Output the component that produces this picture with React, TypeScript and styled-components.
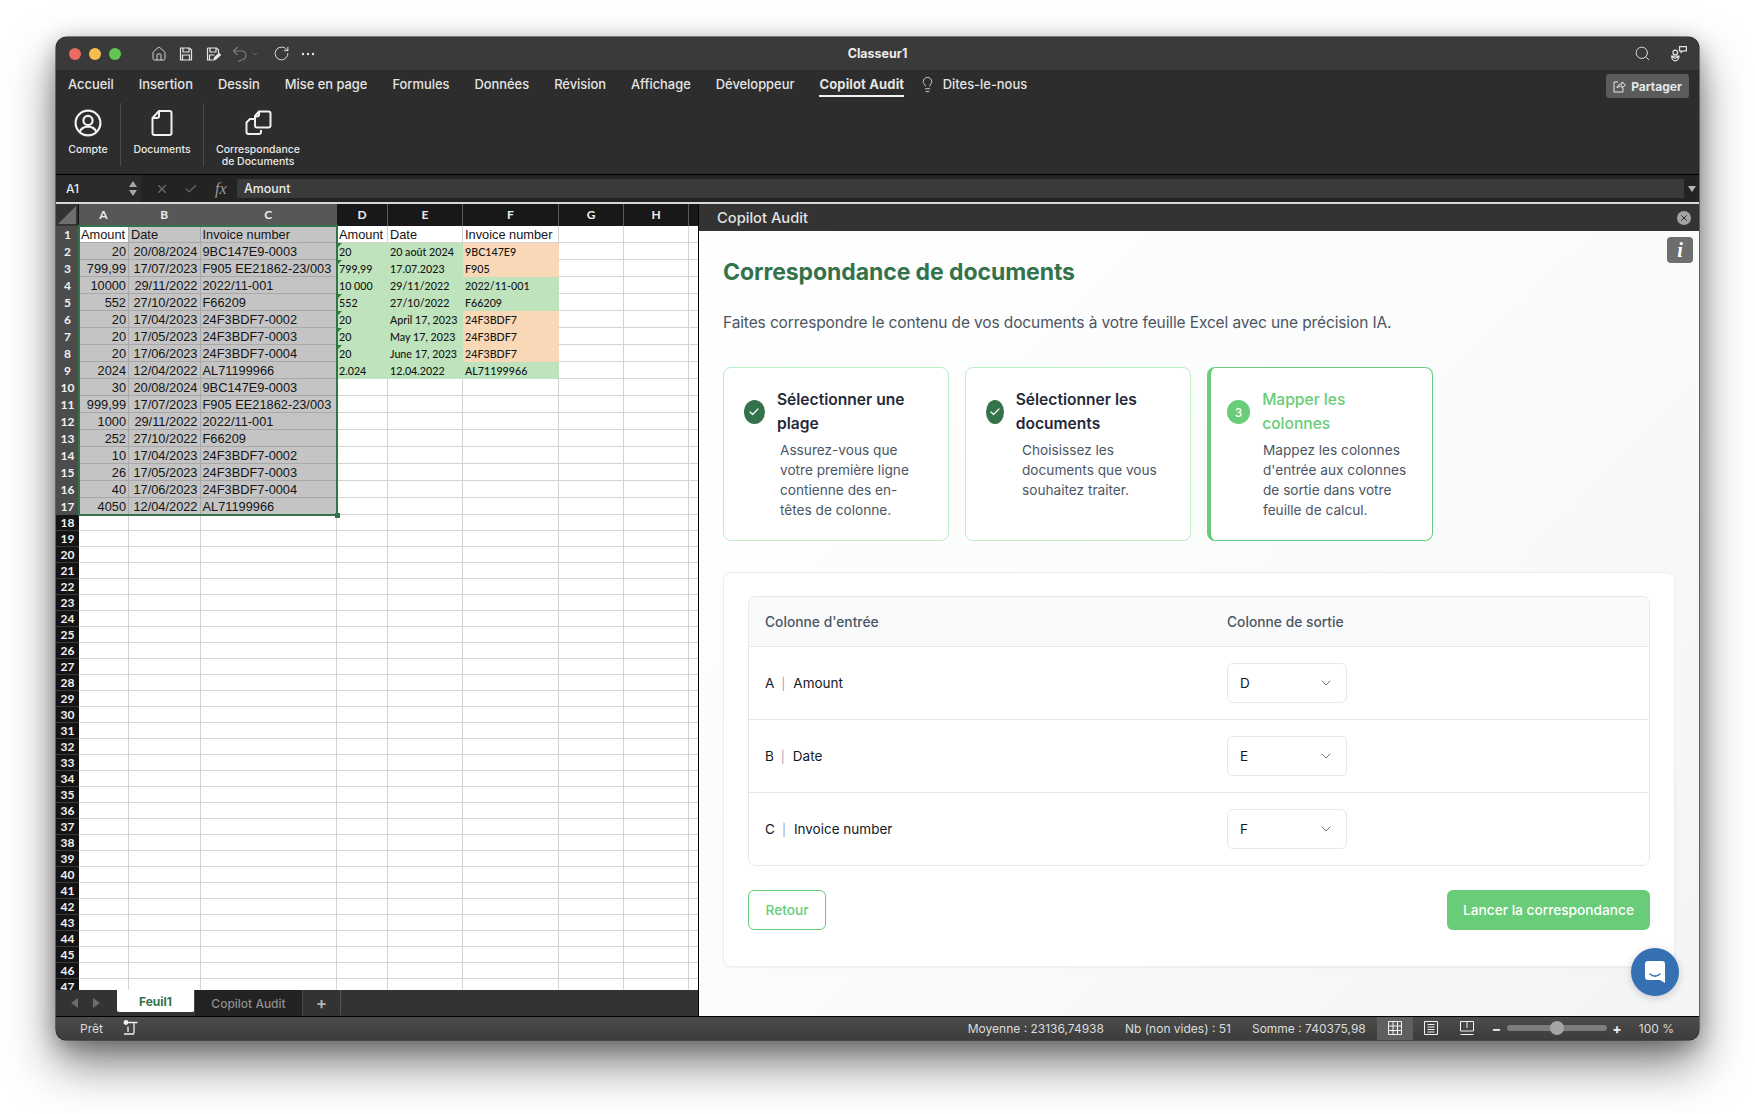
import React from "react";
import styled, { createGlobalStyle } from "styled-components";
import { House, RotateCw, Search, Lightbulb, ChevronDown, Check, X } from "lucide-react";

const Global = createGlobalStyle`
  html, body { margin: 0; padding: 0; background: #fff; }
  body { width: 1755px; height: 1114px; overflow: hidden; font-family: Inter, "Liberation Sans", sans-serif; }
  * { box-sizing: border-box; }
`;

const Page = styled.div`
  padding: 37px 0 0 56px;
  width: 1755px;
  height: 1114px;
  overflow: hidden;
`;
const Win = styled.div`
  width: 1643px;
  height: 1003px;
  display: flex;
  flex-direction: column;
  border-radius: 11px 11px 10px 10px;
  overflow: hidden;
  background: #2d2d2d;
  box-shadow: 0 0 0 0.5px #1c1c1c, 0 24px 48px rgba(0, 0, 0, 0.5), 0 6px 22px rgba(0, 0, 0, 0.28);
`;
const TitleBar = styled.div`
  height: 33px;
  flex: none;
  background: #3a3a3a;
  display: grid;
  grid-template-columns: 1fr auto 1fr;
  align-items: center;
`;
const TitleLeft = styled.div`
  display: flex;
  align-items: center;
  padding-left: 13px;
`;
const Light = styled.span<{ $c: string }>`
  width: 12px;
  height: 12px;
  border-radius: 50%;
  background: ${(p) => p.$c};
  margin-right: 8px;
  display: block;
`;
const QuickIcons = styled.div`
  display: flex;
  align-items: center;
  gap: 11px;
  margin-left: 22px;
  color: #e6e6e6;
`;
const Dim = styled.span`
  display: flex;
  align-items: center;
  gap: 3px;
  color: #7c7c7c;
  margin-right: 3px;
`;
const WinTitle = styled.div`
  font-size: 12.5px;
  font-weight: 700;
  color: #ececec;
`;
const TitleRight = styled.div`
  display: flex;
  justify-content: flex-end;
  align-items: center;
  gap: 19px;
  padding-right: 11px;
  color: #e6e6e6;
`;
const TabRow = styled.div`
  height: 30px;
  flex: none;
  display: flex;
  align-items: flex-start;
  gap: 25px;
  padding: 0 10px 0 12px;
  background: #2d2d2d;
`;
const RibbonTab = styled.div<{ $active?: boolean }>`
  height: 27px;
  padding-top: 3px;
  display: flex;
  align-items: center;
  font-size: ${(p) => (p.$active ? 13 : 12.9)}px;
  font-weight: ${(p) => (p.$active ? 700 : 550)};
  letter-spacing: ${(p) => (p.$active ? 0.15 : 0)}px;
  color: #e4e4e4;
  border-bottom: 2px solid ${(p) => (p.$active ? "#f2f2f2" : "transparent")};
`;
const Tell = styled.div`
  display: flex;
  align-items: center;
  gap: 6.5px;
  height: 27px;
  padding-top: 3px;
  padding-bottom: 2px;
  font-size: 12.9px;
  font-weight: 550;
  color: #e4e4e4;
  margin-left: -10px;
`;
const Share = styled.div`
  margin-left: auto;
  width: 83px;
  height: 24px;
  margin-top: 4px;
  border-radius: 3px;
  background: #5b5b5b;
  color: #e6e6e6;
  font-size: 12px;
  font-weight: 700;
  display: flex;
  align-items: center;
  justify-content: center;
  gap: 5px;
`;
const Ribbon = styled.div`
  height: 74px;
  flex: none;
  background: #2d2d2d;
  display: flex;
  align-items: flex-start;
  padding-top: 3px;
`;
const RibbonItem = styled.div<{ $w: number }>`
  width: ${(p) => p.$w}px;
  display: flex;
  flex-direction: column;
  align-items: center;
  color: #f0f0f0;
`;
const RibbonIcon = styled.div`
  height: 32px;
  margin-top: 4px;
  display: flex;
  align-items: center;
  justify-content: center;
`;
const RibbonLabel = styled.div`
  font-size: 10.5px;
  line-height: 12px;
  font-weight: 500;
  color: #e8e8e8;
  text-align: center;
  margin-top: 5px;
`;
const RibbonSep = styled.div`
  width: 1px;
  height: 63px;
  background: #4a4a4a;
`;
const Formula = styled.div`
  height: 28px;
  flex: none;
  background: #232323;
  border-top: 1px solid #000;
  display: flex;
  align-items: center;
`;
const NameBox = styled.div`
  width: 85px;
  height: 27px;
  display: flex;
  align-items: center;
  justify-content: space-between;
  padding: 0 4px 0 10px;
  font-size: 12px;
  font-weight: 500;
  color: #e6e6e6;
  background: #2a2a2a;
`;
const Stepper = styled.div`
  display: flex;
  flex-direction: column;
  align-items: center;
  gap: 3px;
`;
const Tri = styled.span<{ $down?: boolean; $c?: string }>`
  width: 0;
  height: 0;
  border-left: 4px solid transparent;
  border-right: 4px solid transparent;
  ${(p) => (p.$down ? `border-top: 6px solid ${p.$c || "#a8a8a8"};` : `border-bottom: 6px solid ${p.$c || "#a8a8a8"};`)}
`;
const FormulaIcons = styled.div`
  width: 96px;
  padding-left: 14px;
  display: flex;
  align-items: center;
  gap: 15px;
  color: #6a6a6a;
`;
const Fx = styled.span`
  font-family: "Liberation Serif", serif;
  font-style: italic;
  font-size: 16px;
  color: #9a9a9a;
  margin-left: 2px;
`;
const FormulaInput = styled.div`
  flex: 1;
  height: 19px;
  background: #3a3a3a;
  padding-left: 7px;
  font-size: 12.4px;
  font-weight: 500;
  line-height: 19px;
  color: #ececec;
  border-radius: 2px 0 0 2px;
`;
const FormulaDrop = styled.div`
  width: 15px;
  display: flex;
  justify-content: center;
`;
const WhiteLine = styled.div`
  height: 2px;
  flex: none;
  background: #d8d8d8;
`;
const Main = styled.div`
  height: 812px;
  flex: none;
  display: flex;
`;
const SheetCol = styled.div`
  width: 643px;
  flex: none;
  display: flex;
  flex-direction: column;
  border-right: 1px solid #000;
  background: #333;
`;
const Grid = styled.div`
  height: 786px;
  flex: none;
  overflow: hidden;
  position: relative;
  background: #fff;
`;
const cols = "23px 50px 71.5px 136.5px 51px 75px 96px 65px 65px 10px";
const HeadRow = styled.div`
  display: grid;
  grid-template-columns: ${cols};
  height: 22px;
  background: #161616;
`;
const Corner = styled.div`
  background: #333;
  border-right: 1px solid #111;
  display: flex;
  align-items: flex-end;
  justify-content: flex-end;
  padding: 0 2px 2px 0;
`;
const ColHead = styled.div<{ $sel?: boolean }>`
  background: ${(p) => (p.$sel ? "#575757" : "#181818")};
  border-right: 1px solid ${(p) => (p.$sel ? "#575757" : "#5a5a5a")};
  color: #ececec;
  font-family: Lato, sans-serif;
  font-size: 12px;
  font-weight: 700;
  padding-bottom: 2px;
  display: flex;
  align-items: center;
  justify-content: center;
`;
const Row = styled.div<{ $h: number }>`
  display: grid;
  grid-template-columns: ${cols};
  height: ${(p) => p.$h}px;
`;
const RowHead = styled.div<{ $sel?: boolean }>`
  background: ${(p) => (p.$sel ? "#4c4c4c" : "#141414")};
  border-bottom: 1px solid ${(p) => (p.$sel ? "#4c4c4c" : "#3a3a3a")};
  color: #f0f0f0;
  font-family: Lato, sans-serif;
  font-size: 12px;
  font-weight: 700;
  display: flex;
  align-items: center;
  justify-content: center;
`;
const Cell = styled.div<{ $bg?: string; $right?: boolean; $sel?: boolean; $calibri?: boolean; $flag?: boolean }>`
  position: relative;
  background: ${(p) => p.$bg || "#fff"};
  border-right: 1px solid ${(p) => (p.$sel ? "#a9a9a9" : p.$bg ? p.$bg : "#d4d4d4")};
  border-bottom: 1px solid ${(p) => (p.$sel ? "#a9a9a9" : p.$bg ? p.$bg : "#d4d4d4")};
  font-family: ${(p) => (p.$calibri ? "Lato, sans-serif" : '"Liberation Sans", sans-serif')};
  font-size: ${(p) => (p.$calibri ? "10.7px" : "12.8px")};
  font-weight: ${(p) => (p.$calibri ? 500 : 400)};
  color: #141414;
  line-height: 17px;
  padding: 0 2px;
  text-align: ${(p) => (p.$right ? "right" : "left")};
  white-space: nowrap;
  overflow: hidden;
  &::before {
    content: "";
    display: ${(p) => (p.$flag ? "block" : "none")};
    position: absolute;
    left: 0;
    top: 0;
    border-top: 5px solid #2e7d32;
    border-right: 5px solid transparent;
  }
`;
const Selection = styled.div`
  position: absolute;
  left: 22px;
  top: 21px;
  width: 260px;
  height: 291px;
  border: 2px solid #33724a;
  pointer-events: none;
  &::after {
    content: "";
    position: absolute;
    right: -4px;
    bottom: -4px;
    width: 5px;
    height: 5px;
    background: #33724a;
  }
`;
const SheetTabs = styled.div`
  height: 26px;
  flex: none;
  background: #333;
  display: flex;
  align-items: flex-start;
`;
const SheetNav = styled.div`
  width: 61px;
  height: 25px;
  display: flex;
  align-items: center;
  justify-content: center;
  gap: 15px;
  padding-right: 2px;
`;
const NavTri = styled.span<{ $right?: boolean }>`
  width: 0;
  height: 0;
  border-top: 5px solid transparent;
  border-bottom: 5px solid transparent;
  ${(p) => (p.$right ? "border-left: 7px solid #6c6c6c;" : "border-right: 7px solid #6c6c6c;")}
`;
const SheetTab = styled.div<{ $active?: boolean }>`
  width: ${(p) => (p.$active ? 78 : 108)}px;
  height: ${(p) => (p.$active ? 22 : 26)}px;
  background: ${(p) => (p.$active ? "#fff" : "#222")};
  color: ${(p) => (p.$active ? "#33724a" : "#8e8e8e")};
  border-radius: ${(p) => (p.$active ? "0 0 2px 2px" : "0")};
  font-size: 12px;
  font-weight: ${(p) => (p.$active ? 700 : 500)};
  display: flex;
  align-items: center;
  justify-content: center;
  border-right: 1px solid #4a4a4a;
`;
const AddSheet = styled.div`
  width: 38px;
  height: 25px;
  color: #b5b5b5;
  font-size: 17px;
  font-weight: 600;
  display: flex;
  align-items: center;
  justify-content: center;
  border-right: 1px solid #555;
`;
const Panel = styled.div`
  flex: 1;
  display: flex;
  flex-direction: column;
  position: relative;
  min-width: 0;
`;
const PanelHead = styled.div`
  height: 27px;
  flex: none;
  background: #333;
  display: flex;
  align-items: center;
  justify-content: space-between;
  padding: 0 8px 0 18px;
  color: #e4e4e4;
  font-size: 14.7px;
  font-weight: 500;
`;
const CloseDot = styled.div`
  width: 14px;
  height: 14px;
  border-radius: 50%;
  background: #a3a3a3;
  color: #333;
  display: flex;
  align-items: center;
  justify-content: center;
`;
const PanelBody = styled.div`
  flex: 1;
  min-height: 0;
  position: relative;
  padding: 25px 24px 0 24px;
  background: linear-gradient(135deg, #ffffff 0%, #fafbfb 50%, #f3f4f6 100%);
`;
const InfoBtn = styled.div`
  position: absolute;
  top: 6px;
  right: 6px;
  width: 26px;
  height: 26px;
  border-radius: 4px;
  background: #6e6e6e;
  color: #fff;
  font-family: "Liberation Serif", serif;
  font-style: italic;
  font-weight: 700;
  font-size: 20px;
  display: flex;
  align-items: center;
  justify-content: center;
`;
const Heading = styled.h2`
  margin: 0 0 23px;
  font-size: 23px;
  letter-spacing: -0.08px;
  line-height: 32px;
  font-weight: 700;
  color: #33724a;
`;
const Lead = styled.p`
  margin: 0 0 32px;
  font-size: 15.5px;
  letter-spacing: -0.12px;
  line-height: 24px;
  color: #4b5563;
`;
const Steps = styled.div`
  display: flex;
  gap: 16px;
  margin-bottom: 31px;
`;
const Step = styled.div<{ $active?: boolean }>`
  width: 226px;
  height: 174px;
  background: #fff;
  border-radius: 8px;
  border: 1px solid ${(p) => (p.$active ? "#68cc78" : "#bbeec8")};
  border-left-width: ${(p) => (p.$active ? 4 : 1)}px;
  padding: 20px 20px 20px ${(p) => (p.$active ? 16 : 20)}px;
`;
const StepTop = styled.div`
  display: flex;
  align-items: center;
  gap: 12px;
`;
const StepIcon = styled.div<{ $active?: boolean }>`
  width: 24px;
  height: 24px;
  border-radius: 50%;
  background: ${(p) => (p.$active ? "#68cc78" : "#33724a")};
  color: #fff;
  font-size: 12px;
  font-weight: 500;
  display: flex;
  align-items: center;
  justify-content: center;
`;
const StepTitle = styled.div<{ $active?: boolean }>`
  font-size: 15.6px;
  line-height: 24px;
  font-weight: ${(p) => (p.$active ? 500 : 600)};
  color: ${(p) => (p.$active ? "#68cc78" : "#1f2937")};
`;
const StepText = styled.div`
  margin-top: 4px;
  padding-left: 36px;
  font-size: 13.65px;
  line-height: 20px;
  color: #4b5563;
`;
const Card = styled.div`
  height: 395px;
  background: #fff;
  border: 1px solid #eceef1;
  border-radius: 8px;
  box-shadow: 0 1px 2px rgba(0, 0, 0, 0.05);
  padding: 23px 24px 24px;
`;
const MapTable = styled.div`
  border: 1px solid #e5e7eb;
  border-radius: 8px;
  overflow: hidden;
`;
const MapRow = styled.div<{ $head?: boolean }>`
  display: grid;
  grid-template-columns: 478px 1fr;
  align-items: center;
  height: ${(p) => (p.$head ? 49 : 73)}px;
  background: ${(p) => (p.$head ? "#f9fafb" : "#fff")};
  border-top: ${(p) => (p.$head ? "0" : "1px solid #e5e7eb")};
  font-size: ${(p) => (p.$head ? 13.8 : 13.5)}px;
  font-weight: ${(p) => (p.$head ? 500 : 400)};
  color: ${(p) => (p.$head ? "#4b5563" : "#111827")};
`;
const MapLeft = styled.div`
  padding-left: 16px;
  display: flex;
  align-items: center;
`;
const Pipe = styled.span`
  margin: 0 8px 0 7px;
  color: #9ca3af;
  font-size: 12px;
`;
const Selector = styled.div`
  width: 120px;
  height: 40px;
  border: 1px solid #e5e7eb;
  border-radius: 6px;
  background: #fff;
  padding: 0 12px;
  display: flex;
  align-items: center;
  justify-content: space-between;
  color: #111827;
  svg {
    color: #6b7280;
  }
`;
const Actions = styled.div`
  display: flex;
  justify-content: space-between;
  margin-top: 24px;
`;
const GhostBtn = styled.div`
  width: 78px;
  height: 40px;
  border: 1px solid #68cc78;
  border-radius: 6px;
  color: #68cc78;
  font-size: 13.7px;
  font-weight: 500;
  display: flex;
  align-items: center;
  justify-content: center;
`;
const PrimaryBtn = styled.div`
  width: 203px;
  height: 40px;
  border-radius: 6px;
  background: #68cc78;
  color: #fff;
  font-size: 13.7px;
  font-weight: 500;
  display: flex;
  align-items: center;
  justify-content: center;
`;
const Chat = styled.div`
  position: absolute;
  right: 20px;
  bottom: 20px;
  width: 48px;
  height: 48px;
  border-radius: 50%;
  background: #3470b2;
  box-shadow: 0 2px 8px rgba(0, 0, 0, 0.18);
  display: flex;
  align-items: center;
  justify-content: center;
`;
const Status = styled.div`
  flex: 1;
  min-height: 0;
  border-top: 1px solid #000;
  background: linear-gradient(#4c4c4c, #3c3c3c);
  display: flex;
  align-items: center;
  padding: 0 0 1px 24px;
  font-size: 12px;
  color: #dcdcdc;
`;
const StatusIcon = styled.div`
  margin-left: 20px;
  display: flex;
  color: #f0f0f0;
`;
const StatusStats = styled.div`
  margin-left: auto;
  display: flex;
  gap: 21px;
`;
const ViewBtn = styled.div<{ $on?: boolean }>`
  width: 36px;
  height: 23px;
  display: flex;
  align-items: center;
  justify-content: center;
  background: ${(p) => (p.$on ? "#5f5f5f" : "transparent")};
  color: #f2f2f2;
`;
const Views = styled.div`
  margin-left: 11px;
  display: flex;
`;
const Zoom = styled.div`
  display: flex;
  align-items: center;
  margin-left: 7px;
  color: #f0f0f0;
  font-weight: 700;
  font-size: 14px;
`;
const Slider = styled.div`
  width: 100px;
  height: 6px;
  border-radius: 3px;
  background: #7d7d7d;
  margin: 0 5px 0 6px;
  display: flex;
  align-items: center;
`;
const Thumb = styled.div`
  width: 14px;
  height: 14px;
  border-radius: 50%;
  background: #a4a4a4;
  margin-left: 43px;
`;
const Pct = styled.div`
  margin: 0 25px 0 17px;
`;

const G = "#bfe3bd";
const O = "#f8d8b6";
const left: [string, string, string][] = [
  ["Amount", "Date", "Invoice number"],
  ["20", "20/08/2024", "9BC147E9-0003"],
  ["799,99", "17/07/2023", "F905 EE21862-23/003"],
  ["10000", "29/11/2022", "2022/11-001"],
  ["552", "27/10/2022", "F66209"],
  ["20", "17/04/2023", "24F3BDF7-0002"],
  ["20", "17/05/2023", "24F3BDF7-0003"],
  ["20", "17/06/2023", "24F3BDF7-0004"],
  ["2024", "12/04/2022", "AL71199966"],
  ["30", "20/08/2024", "9BC147E9-0003"],
  ["999,99", "17/07/2023", "F905 EE21862-23/003"],
  ["1000", "29/11/2022", "2022/11-001"],
  ["252", "27/10/2022", "F66209"],
  ["10", "17/04/2023", "24F3BDF7-0002"],
  ["26", "17/05/2023", "24F3BDF7-0003"],
  ["40", "17/06/2023", "24F3BDF7-0004"],
  ["4050", "12/04/2022", "AL71199966"],
];
const right: { d: string; e: string; f: string; o?: boolean; flag?: boolean }[] = [
  { d: "20", e: "20 août 2024", f: "9BC147E9", o: true, flag: true },
  { d: "799,99", e: "17.07.2023", f: "F905", o: true, flag: true },
  { d: "10 000", e: "29/11/2022", f: "2022/11-001" },
  { d: "552", e: "27/10/2022", f: "F66209", flag: true },
  { d: "20", e: "April 17, 2023", f: "24F3BDF7", o: true, flag: true },
  { d: "20", e: "May 17, 2023", f: "24F3BDF7", o: true, flag: true },
  { d: "20", e: "June 17, 2023", f: "24F3BDF7", o: true, flag: true },
  { d: "2.024", e: "12.04.2022", f: "AL71199966" },
];

const DocIcon = () => (
  <svg width="24" height="28" viewBox="0 0 24 28" fill="none" stroke="currentColor" strokeWidth="2" strokeLinejoin="round">
    <path d="M9 2h10.5A2 2 0 0 1 21.5 4v20a2 2 0 0 1-2 2h-15a2 2 0 0 1-2-2V9z" />
    <path d="M9 2v5a2 2 0 0 1-2 2H2.5" />
  </svg>
);
const MatchIcon = () => (
  <svg width="27" height="26" viewBox="0 0 27 26" fill="none" stroke="currentColor" strokeWidth="2" strokeLinejoin="round">
    <path d="M14 1.500h9.500a2 2 0 0 1 2 2v12a2 2 0 0 1-2 2H12a2 2 0 0 1-2-2V6z" />
    <path d="M14 1.500v3a2 2 0 0 1-2 2H10" />
    <path d="M10 9H5L1.500 12.500V22a2 2 0 0 0 2 2H14a2 2 0 0 0 2-2v-2" />
  </svg>
);
const UserIcon = () => (
  <svg width="28" height="28" viewBox="0 0 28 28" fill="none" stroke="currentColor" strokeWidth="2.2">
    <circle cx="14" cy="14" r="12.4" />
    <circle cx="14" cy="11.5" r="4.6" />
    <path d="M5.500 23c1.500-3.600 4.500-5.400 8.500-5.400s7 1.800 8.500 5.400" />
  </svg>
);

export default function App() {
  const rows = Array.from({ length: 47 }, (_, i) => i);
  return (
    <Page>
      <Global />
      <Win>
        <TitleBar>
          <TitleLeft>
            <Light $c="#ed6a5e" />
            <Light $c="#f5bf4f" />
            <Light $c="#62c554" />
            <QuickIcons>
              <House size={16} strokeWidth={1.3} />
              <svg width="16" height="16" viewBox="0 0 16 16" fill="none" stroke="currentColor" strokeWidth="1.2">
                <path d="M2.500 2h9l2 2v10h-11z" />
                <path d="M5 2v4h6V2M4.500 14V9h7v5" />
              </svg>
              <svg width="16" height="16" viewBox="0 0 16 16" fill="none" stroke="currentColor" strokeWidth="1.2">
                <path d="M2.500 2h9l2 2v4M8 14H2.500V2" />
                <path d="M5 2v4h6V2M4.500 14V9h5" />
                <path d="M9 14l.5-2.500 4.500-4 1.400 1.600-4.400 4z" fill="currentColor" />
              </svg>
              <Dim>
                <svg width="16" height="16" viewBox="0 0 16 16" fill="none" stroke="currentColor" strokeWidth="1.2">
                  <path d="M5.500 1L1.500 5l4 4" />
                  <path d="M1.500 5H10c5 0 5 7 1 8.500L6 15.500" />
                </svg>
                <ChevronDown size={8} strokeWidth={2} />
              </Dim>
              <RotateCw size={17} strokeWidth={1.3} />
              <svg width="14" height="4" viewBox="0 0 14 4" fill="currentColor">
                <circle cx="2" cy="2" r="1.2" />
                <circle cx="7" cy="2" r="1.2" />
                <circle cx="12" cy="2" r="1.2" />
              </svg>
            </QuickIcons>
          </TitleLeft>
          <WinTitle>Classeur1</WinTitle>
          <TitleRight>
            <Search size={17} strokeWidth={1.3} />
            <svg width="18" height="18" viewBox="0 0 17 17" fill="none" stroke="currentColor" strokeWidth="1.1">
              <path d="M9 1.500h6.500v4h-3l-2 1.500v-1.500H9z" />
              <circle cx="5" cy="7" r="2.2" />
              <path d="M1.500 10.500h7a3.500 4.500 0 0 1-7 0zM1.500 11c2 1.500 5 1.500 7 0" />
            </svg>
          </TitleRight>
        </TitleBar>
        <TabRow>
          {["Accueil", "Insertion", "Dessin", "Mise en page", "Formules", "Données", "Révision", "Affichage", "Développeur"].map((t) => (
            <RibbonTab key={t}>{t}</RibbonTab>
          ))}
          <RibbonTab $active>Copilot Audit</RibbonTab>
          <Tell>
            <Lightbulb size={17} strokeWidth={1.2} />
            Dites-le-nous
          </Tell>
          <Share>
            <svg width="13" height="13" viewBox="0 0 13 13" fill="none" stroke="currentColor" strokeWidth="1">
              <path d="M5 2H1v10h9V8" />
              <path d="M4 8c.5-3 2.500-4 5-4V2l3.500 3L9 8V6C7 6 5 6.500 4 8z" />
            </svg>
            Partager
          </Share>
        </TabRow>
        <Ribbon>
          <RibbonItem $w={64}>
            <RibbonIcon>
              <UserIcon />
            </RibbonIcon>
            <RibbonLabel>Compte</RibbonLabel>
          </RibbonItem>
          <RibbonSep />
          <RibbonItem $w={82}>
            <RibbonIcon>
              <DocIcon />
            </RibbonIcon>
            <RibbonLabel>Documents</RibbonLabel>
          </RibbonItem>
          <RibbonSep />
          <RibbonItem $w={108}>
            <RibbonIcon>
              <MatchIcon />
            </RibbonIcon>
            <RibbonLabel>
              Correspondance
              <br />
              de Documents
            </RibbonLabel>
          </RibbonItem>
        </Ribbon>
        <Formula>
          <NameBox>
            A1
            <Stepper>
              <Tri />
              <Tri $down />
            </Stepper>
          </NameBox>
          <FormulaIcons>
            <X size={14} strokeWidth={2} />
            <Check size={14} strokeWidth={2} />
            <Fx>fx</Fx>
          </FormulaIcons>
          <FormulaInput>Amount</FormulaInput>
          <FormulaDrop>
            <Tri $down $c="#b5b5b5" />
          </FormulaDrop>
        </Formula>
        <WhiteLine />
        <Main>
          <SheetCol>
            <Grid>
              <HeadRow>
                <Corner>
                  <svg width="18" height="18" viewBox="0 0 18 18">
                    <path d="M18 0v18H0z" fill="#6e6e6e" />
                  </svg>
                </Corner>
                {["A", "B", "C", "D", "E", "F", "G", "H", ""].map((c, i) => (
                  <ColHead key={i} $sel={i < 3}>
                    {c}
                  </ColHead>
                ))}
              </HeadRow>
              {rows.map((i) => {
                const l = left[i];
                const head = i === 0;
                const r = i >= 1 ? right[i - 1] : undefined;
                return (
                  <Row key={i} $h={i < 17 ? 17 : 16}>
                    <RowHead $sel={i < 17}>{i + 1}</RowHead>
                    <Cell $sel={!!l} $bg={l && !head ? "#c4c4c4" : undefined} $right={!head && !!l}>
                      {l ? l[0] : ""}
                    </Cell>
                    <Cell $sel={!!l} $bg={l ? "#c4c4c4" : undefined} $right={!head && !!l}>
                      {l ? l[1] : ""}
                    </Cell>
                    <Cell $sel={!!l} $bg={l ? "#c4c4c4" : undefined}>
                      {l ? l[2] : ""}
                    </Cell>
                    {head ? (
                      <>
                        <Cell>Amount</Cell>
                        <Cell>Date</Cell>
                        <Cell>Invoice number</Cell>
                      </>
                    ) : r ? (
                      <>
                        <Cell $calibri $bg={G} $flag={r.flag}>
                          {r.d}
                        </Cell>
                        <Cell $calibri $bg={G}>
                          {r.e}
                        </Cell>
                        <Cell $calibri $bg={r.o ? O : G}>
                          {r.f}
                        </Cell>
                      </>
                    ) : (
                      <>
                        <Cell />
                        <Cell />
                        <Cell />
                      </>
                    )}
                    <Cell />
                    <Cell />
                    <Cell />
                  </Row>
                );
              })}
              <Selection />
            </Grid>
            <SheetTabs>
              <SheetNav>
                <NavTri />
                <NavTri $right />
              </SheetNav>
              <SheetTab $active>Feuil1</SheetTab>
              <SheetTab>Copilot Audit</SheetTab>
              <AddSheet>+</AddSheet>
            </SheetTabs>
          </SheetCol>
          <Panel>
            <PanelHead>
              Copilot Audit
              <CloseDot>
                <X size={10} strokeWidth={2.4} />
              </CloseDot>
            </PanelHead>
            <PanelBody>
              <InfoBtn>i</InfoBtn>
              <Heading>Correspondance de documents</Heading>
              <Lead>Faites correspondre le contenu de vos documents à votre feuille Excel avec une précision IA.</Lead>
              <Steps>
                <Step>
                  <StepTop>
                    <StepIcon>
                      <Check size={12} strokeWidth={2.4} />
                    </StepIcon>
                    <StepTitle>Sélectionner une plage</StepTitle>
                  </StepTop>
                  <StepText>Assurez-vous que votre première ligne contienne des en-têtes de colonne.</StepText>
                </Step>
                <Step>
                  <StepTop>
                    <StepIcon>
                      <Check size={12} strokeWidth={2.4} />
                    </StepIcon>
                    <StepTitle>Sélectionner les documents</StepTitle>
                  </StepTop>
                  <StepText>Choisissez les documents que vous souhaitez traiter.</StepText>
                </Step>
                <Step $active>
                  <StepTop>
                    <StepIcon $active>3</StepIcon>
                    <StepTitle $active>Mapper les colonnes</StepTitle>
                  </StepTop>
                  <StepText>Mappez les colonnes d'entrée aux colonnes de sortie dans votre feuille de calcul.</StepText>
                </Step>
              </Steps>
              <Card>
                <MapTable>
                  <MapRow $head>
                    <MapLeft>Colonne d'entrée</MapLeft>
                    <div>Colonne de sortie</div>
                  </MapRow>
                  {[
                    ["A", "Amount", "D"],
                    ["B", "Date", "E"],
                    ["C", "Invoice number", "F"],
                  ].map(([a, b, c]) => (
                    <MapRow key={a}>
                      <MapLeft>
                        {a}
                        <Pipe>|</Pipe>
                        {b}
                      </MapLeft>
                      <Selector>
                        {c}
                        <ChevronDown size={16} strokeWidth={1.5} />
                      </Selector>
                    </MapRow>
                  ))}
                </MapTable>
                <Actions>
                  <GhostBtn>Retour</GhostBtn>
                  <PrimaryBtn>Lancer la correspondance</PrimaryBtn>
                </Actions>
              </Card>
              <Chat>
                <svg width="22" height="24" viewBox="0 0 22 24">
                  <path d="M4 1h14a3 3 0 0 1 3 3v19l-5-3H4a3 3 0 0 1-3-3V4a3 3 0 0 1 3-3z" fill="#fff" />
                  <path d="M6 14c3 2.500 7 2.500 10 0" fill="none" stroke="#3470b2" strokeWidth="1.6" strokeLinecap="round" />
                </svg>
              </Chat>
            </PanelBody>
          </Panel>
        </Main>
        <Status>
          Prêt
          <StatusIcon>
            <svg width="16" height="16" viewBox="0 0 16 16" fill="none" stroke="currentColor" strokeWidth="1.3">
              <circle cx="3" cy="2.500" r="1.800" fill="currentColor" />
              <path d="M5 2.500h9.500M11 2.500v11M1 14h10M5 6.500v5.500" />
            </svg>
          </StatusIcon>
          <StatusStats>
            <span>Moyenne : 23136,74938</span>
            <span>Nb (non vides) : 51</span>
            <span>Somme : 740375,98</span>
          </StatusStats>
          <Views>
            <ViewBtn $on>
              <svg width="14" height="14" viewBox="0 0 14 14" fill="none" stroke="currentColor" strokeWidth="1">
                <path d="M.5.5h13v13H.5zM.5 5h13M.5 9.500h13M5 .5v13M9.500.5v13" />
              </svg>
            </ViewBtn>
            <ViewBtn>
              <svg width="14" height="14" viewBox="0 0 14 14" fill="none" stroke="currentColor" strokeWidth="1">
                <path d="M.5.5h13v13H.5zM3.500 3.500h7M3.500 6h7M3.500 8.500h7M3.500 11h7" />
              </svg>
            </ViewBtn>
            <ViewBtn>
              <svg width="14" height="14" viewBox="0 0 14 14" fill="none" stroke="currentColor" strokeWidth="1">
                <path d="M.5 13.500h13M.5.5h13v9.500H.5zM7 .5V7" />
              </svg>
            </ViewBtn>
          </Views>
          <Zoom>
            −
            <Slider>
              <Thumb />
            </Slider>
            +
          </Zoom>
          <Pct>100 %</Pct>
        </Status>
      </Win>
    </Page>
  );
}
